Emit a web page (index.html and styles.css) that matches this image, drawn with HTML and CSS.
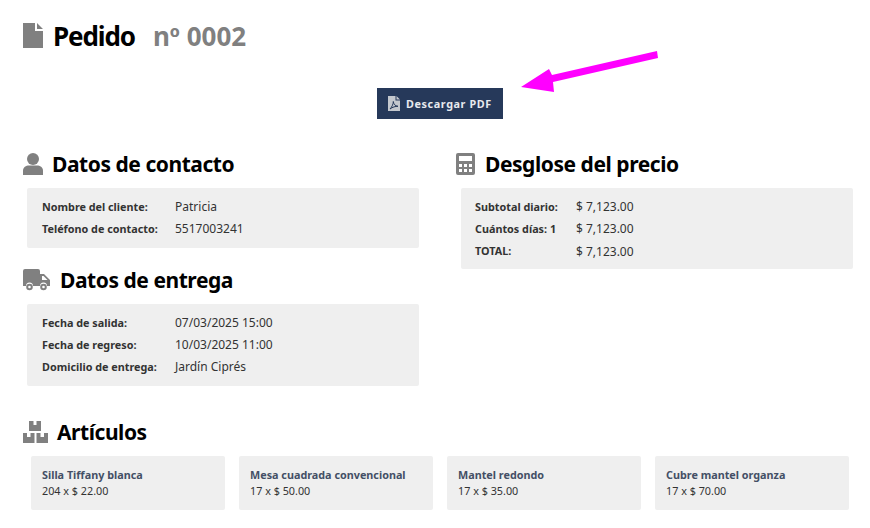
FILE: index.html
```html
<!DOCTYPE html>
<html lang="es">
<head>
<meta charset="utf-8">
<title>Pedido nº 0002</title>
<link rel="stylesheet" href="styles.css">
</head>
<body>
<header class="title">
  <svg class="title-icon" viewBox="0 0 20 25"><path d="M0 0H12V8H20V25H0Z M14 0L20 6H14Z" fill="#808080"/></svg>
  <h1>Pedido</h1>
  <span class="order-no">nº 0002</span>
</header>
<div class="action">
  <a class="pdf-btn">
    <svg class="pdf-icon" viewBox="0 0 12 15"><path d="M0 0H7.500V4.500H12V15H0Z M8.500 0L12 3.500H8.500Z" fill="#c4c8ce"/><path d="M2 13C4 11 5.500 7.500 5.300 5.500C5.600 8 7 10 10 10.300C7.500 10.300 4.500 11 2 13Z" fill="none" stroke="#26395a" stroke-width="1"/></svg>
    <span>Descargar PDF</span>
  </a>
</div>
<svg class="arrow" viewBox="0 0 870 528"><polygon points="521,87 549,69 552,75 657,51 658,58 553,82 554,92" fill="#ff00ff"/></svg>
<main class="columns">
  <div class="col">
    <h2 class="head"><svg class="ic-user" viewBox="0 0 20 22"><circle cx="10" cy="6" r="6" fill="#808080"/><path d="M0 22V18C0 14 3 12.500 6 12.500H14C17 12.500 20 14 20 18V22Z" fill="#808080"/></svg>Datos de contacto</h2>
    <section class="card">
      <div class="row"><b>Nombre del cliente:</b><span>Patricia</span></div>
      <div class="row"><b>Teléfono de contacto:</b><span>5517003241</span></div>
    </section>
    <h2 class="head head-2"><svg class="ic-truck" viewBox="0 0 27 22"><path fill-rule="evenodd" d="M0 2Q0 0 2 0H15Q17 0 17 2V5H21L27 11V17H24A3.500 3.500 0 0 0 17 17H10A3.500 3.500 0 0 0 3 17H0ZM19 7V11H24.500L20.500 7Z" fill="#808080"/><circle cx="6.500" cy="18" r="2.300" fill="#fff" stroke="#808080" stroke-width="2"/><circle cx="20.500" cy="18" r="2.300" fill="#fff" stroke="#808080" stroke-width="2"/></svg>Datos de entrega</h2>
    <section class="card">
      <div class="row"><b>Fecha de salida:</b><span>07/03/2025 15:00</span></div>
      <div class="row"><b>Fecha de regreso:</b><span>10/03/2025 11:00</span></div>
      <div class="row"><b>Domicilio de entrega:</b><span>Jardín Ciprés</span></div>
    </section>
  </div>
  <div class="col">
    <h2 class="head"><svg class="ic-calc" viewBox="0 0 19 22"><path fill-rule="evenodd" d="M2 0H17Q19 0 19 2V20Q19 22 17 22H2Q0 22 0 20V2Q0 0 2 0ZM3 3V8H16V3ZM3 11V14H6V11ZM8 11V14H11V11ZM13 11V14H16V11ZM3 16V19H6V16ZM8 16V19H11V16ZM13 16V19H16V16Z" fill="#808080"/></svg>Desglose del precio</h2>
    <section class="card card-price">
      <div class="row"><b>Subtotal diario:</b><span>$ 7,123.00</span></div>
      <div class="row"><b>Cuántos días: 1</b><span>$ 7,123.00</span></div>
      <div class="row"><b>TOTAL:</b><span>$ 7,123.00</span></div>
    </section>
  </div>
</main>
<h2 class="head head-items"><svg class="ic-boxes" viewBox="0 0 25 22"><path fill-rule="evenodd" d="M6 0H18V10H6ZM10.500 0V4H13.500V0Z M0 12H11.500V22H0ZM4 12V16H7.500V12Z M13.500 12H25V22H13.500ZM17.500 12V16H21V12Z" fill="#808080"/></svg>Artículos</h2>
<section class="items">
  <article class="item"><b>Silla Tiffany blanca</b><span>204 x $ 22.00</span></article>
  <article class="item"><b>Mesa cuadrada convencional</b><span>17 x $ 50.00</span></article>
  <article class="item"><b>Mantel redondo</b><span>17 x $ 35.00</span></article>
  <article class="item"><b>Cubre mantel organza</b><span>17 x $ 70.00</span></article>
</section>
</body>
</html>
```
FILE: styles.css
```css
* { box-sizing: border-box; }
html, body { margin: 0; padding: 0; }
body {
  width: 870px;
  height: 528px;
  overflow: hidden;
  position: relative;
  background: #fff;
  font-family: "Noto Sans", sans-serif;
  color: #333;
  padding: 23px 17px 0 23px;
}
.title { display: flex; align-items: center; height: 25px; }
.title-icon { width: 20px; height: 25px; margin-right: 10px; flex: none; }
.title h1 { margin: 2px 0 0; font-size: 26px; line-height: 25px; font-weight: 700; color: #000; letter-spacing: -1.100px; }
.order-no { margin: 2px 0 0 18px; font-size: 26px; line-height: 25px; font-weight: 700; color: #808080; }
.action { display: flex; justify-content: center; padding: 40px 0 0 4px; }
.pdf-btn { display: flex; align-items: center; width: 126px; height: 31px; padding-left: 11px; background: #26395a; color: #e8eaee; font-size: 10.800px; font-weight: 700; letter-spacing: 0.6px; }
.pdf-icon { width: 12px; height: 15px; margin-right: 6px; flex: none; }
.arrow { position: absolute; left: 0; top: 0; width: 870px; height: 528px; pointer-events: none; }
.columns { display: grid; grid-template-columns: 396px 396px; column-gap: 38px; margin-top: 33px; }
.head { display: flex; align-items: center; margin: 0; height: 24px; font-size: 21px; font-weight: 700; color: #000; letter-spacing: -0.45px; }
.head svg { flex: none; }
.ic-user { width: 20px; height: 22px; margin-right: 9px; }
.ic-truck { width: 27px; height: 22px; margin-right: 10px; }
.ic-calc { width: 19px; height: 22px; margin-right: 10px; }
.ic-boxes { width: 25px; height: 22px; margin-right: 9px; }
.head-2 { margin-top: 20px; }
.card { margin: 12px 0 0 4px; width: 392px; padding: 8px 15px 8px 15px; background: #efefef; border-radius: 2px; }
.col:last-child .head { margin-left: -1px; }
.card-price { padding: 8px 14px 7px; }
.row { display: flex; align-items: center; height: 22px; font-size: 12px; color: #333; }
.row span { margin-top: -1px; }
.row b { font-size: 10.800px; font-weight: 700; width: 133px; flex: none; margin-top: -2px; }
.card-price .row b { width: 101px; }
.card-price .row:last-child span { margin-top: 1px; }
.head-items { margin-top: 34px; }
.items { display: grid; grid-template-columns: repeat(4, 194px); column-gap: 14px; margin: 12px 0 0 8px; }
.item { display: flex; flex-direction: column; height: 54px; padding: 11px 11px 0; background: #efefef; border-radius: 2px; font-size: 10.800px; line-height: 16px; color: #333; }
.item b { font-weight: 700; color: #444f66; }
```
